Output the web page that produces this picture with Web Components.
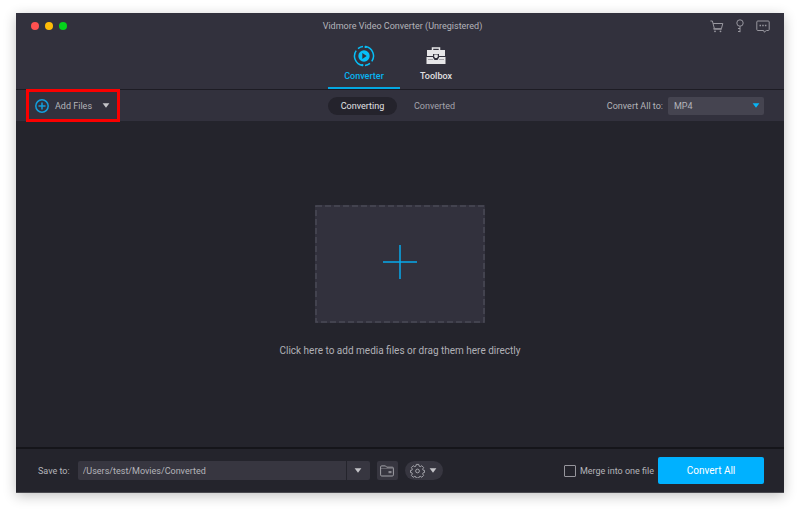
<!DOCTYPE html>
<html lang="en">
<head>
<meta charset="utf-8">
<title>Vidmore Video Converter</title>
<style>
  body {
    margin: 0; min-height: 100vh; box-sizing: border-box; padding: 13px 16px 19px;
    display: flex; background: #fff; color: #b4b4ba;
    font-family: Roboto, "Liberation Sans", sans-serif; font-size: 9px; line-height: 12px;
  }
</style>
</head>
<body>
<converter-app></converter-app>
<script>
const base = `*{box-sizing:border-box}button,input,select{font:inherit;color:inherit;margin:0;padding:0;border:0;background:none}svg{display:block;flex:none}`;
function define(name, css, html) {
  const template = document.createElement('template');
  template.innerHTML = `<style>${base}${css}</style>${html}`;
  customElements.define(name, class extends HTMLElement {
    constructor() {
      super();
      this.attachShadow({ mode: 'open' }).append(template.content.cloneNode(true));
    }
  });
}

define('caret-icon', `:host{display:block;color:#c4c4c8;pointer-events:none}`,
  `<svg width="8" height="5" viewBox="0 0 8 5"><path d="M.6.3h6.8L4 4.8z" fill="currentColor"/></svg>`);

define('title-bar', `
  :host{display:grid;grid-template-columns:1fr auto 1fr;align-items:center;height:26px;padding:0 14px 0 15px}
  .lights{display:flex;gap:6px}
  .lights button{width:8px;height:8px;border-radius:50%}
  .close{background:#ff5150}.min{background:#ffbc07}.max{background:#04d21b}
  h1{margin:0;padding-left:4px;font-size:9px;font-weight:400;color:#b4b4bb}
  .tools{display:flex;justify-content:flex-end;align-items:center;gap:11px;color:#98979f}
`, `
  <div class="lights"><button class="close" aria-label="Close"></button><button class="min" aria-label="Minimize"></button><button class="max" aria-label="Zoom"></button></div>
  <h1><slot></slot></h1>
  <div class="tools">
    <button aria-label="Buy"><svg width="14" height="13" viewBox="0 0 14 13" fill="none" stroke="currentColor"><path d="M.4 1h2l2 7.700h7l1.400-5.200H3.100M4.200 7.900l-.5 1.300h8"/><circle cx="5" cy="11.300" r=".9" fill="currentColor" stroke="none"/><circle cx="10.500" cy="11.300" r=".9" fill="currentColor" stroke="none"/></svg></button>
    <button aria-label="Register"><svg width="10" height="14" viewBox="0 0 10 14" fill="none" stroke="currentColor"><circle cx="5" cy="4" r="3.200"/><path d="M5 7.200v6M3 9.500h2M3 12.500h2"/></svg></button>
    <button aria-label="Feedback"><svg width="14" height="13" viewBox="0 0 14 13" fill="none" stroke="currentColor"><path d="M1.800 1h10.400q1 0 1 1v7.500q0 1-1 1h-1.800l-2.200 1.700-.5-1.700H1.800q-1 0-1-1V2q0-1 1-1z"/><path d="M3.500 5.500h1.500M6.200 5.500h1.500M8.900 5.500h1.500" stroke-width="1.500"/></svg></button>
  </div>`);

define('mode-tab', `
  :host{display:block;width:72px}
  button{width:100%;height:50px;display:flex;flex-direction:column;align-items:center;justify-content:flex-end;gap:3px;padding-bottom:5px;border-bottom:2px solid transparent;color:#e0e0e2;font-weight:500}
  :host([active]) button{color:#07b4f1;border-color:#04a7e2}
`, `<button><slot name="icon"></slot><span><slot></slot></span></button>`);

define('app-header', `
  :host{display:block;background:#32313d;border-bottom:1px solid #1d1c24}
  nav{display:flex;justify-content:center}
`, `
  <title-bar>Vidmore Video Converter (Unregistered)</title-bar>
  <nav>
    <mode-tab active><svg slot="icon" width="22" height="22" viewBox="0 0 22 22" fill="none"><circle cx="11" cy="11" r="5.700" fill="#06bff8"/><path d="M9.300 8v6l4.400-3z" fill="#32313d"/><g stroke="#06bff8" stroke-width="1.500"><path d="M12.500 1.600a9.500 9.500 0 0 1 6.300 14.800"/><path d="M17 18.400a9.500 9.500 0 0 1-5 2"/><path d="M9.500 20.400A9.500 9.500 0 0 1 3.200 5.600"/><path d="M5 3.600a9.500 9.500 0 0 1 5-2"/></g><circle cx="12.700" cy="1.900" r="1.200" fill="#06bff8"/><circle cx="9.300" cy="20.100" r="1.200" fill="#06bff8"/></svg>Converter</mode-tab>
    <mode-tab><svg slot="icon" width="20" height="22" viewBox="0 0 20 22"><path d="M6.500 5.500V3h7v2.500" fill="none" stroke="#e6e6e8" stroke-width="1.500"/><path d="M1 5h18v6H1zM.5 12h19v7H.5z" fill="#e6e6e8"/><path d="M2 14.500h5M13 14.500h5" stroke="#a5a4aa"/><path d="M7 9h6v3.500L11.500 15h-3L7 12.500z" fill="#32313d"/><path d="M8.200 9.500h3.600v2.200L10.800 13H9.200l-1-1.300z" fill="#e6e6e8"/></svg>Toolbox</mode-tab>
  </nav>`);

define('add-files', `
  :host{display:block;position:relative;justify-self:start}
  :host::after{content:"";position:absolute;inset:-1px 0;border:3px solid #fa0000;pointer-events:none}
  button{height:31px;display:flex;align-items:center;padding:0 10px 0 9px;gap:6px}
  caret-icon{margin-left:4px}
`, `<button><svg width="14" height="14" viewBox="0 0 14 14" fill="none" stroke="#139fdc" stroke-width="1.500"><circle cx="7" cy="7" r="6.200"/><path d="M7 3.500v7M3.500 7h7"/></svg><slot></slot><caret-icon></caret-icon></button>`);

define('format-select', `
  :host{display:flex;justify-content:flex-end;align-items:center;gap:5px}
  .box{display:grid;align-items:center;width:96px;background:#454450;border-radius:2px}
  select,caret-icon{grid-area:1/1}
  select{appearance:none;height:18px;width:100%;padding:0 6px}
  caret-icon{justify-self:end;margin-right:4px;color:#07b4f5}
`, `<label for="f"><slot></slot></label><span class="box"><select id="f"><option>MP4</option></select><caret-icon></caret-icon></span>`);

define('tool-strip', `
  :host{display:grid;grid-template-columns:1fr auto 1fr;align-items:center;background:#32313d;padding:0 20px 0 10px}
  .views{display:flex;gap:3px;padding:0 0 0 7px}
  .views button{width:69px;height:18px;border-radius:9px;color:#a4a4ac}
  .views .on{background:#24232c;color:#e2e2e4}
`, `
  <add-files>Add Files</add-files>
  <div class="views"><button class="on">Converting</button><button>Converted</button></div>
  <format-select>Convert All to:</format-select>`);

define('drop-zone', `
  :host{flex:1;display:flex;align-items:center;justify-content:center;padding-bottom:7px;font-size:10px}
  button{display:flex;flex-direction:column;align-items:center;gap:22px;color:#b0b0b6}
  .target{width:170px;height:118px;padding-bottom:4px;display:grid;place-items:center;background:#32313d;position:relative}
  .edge{position:absolute;inset:0;width:100%;height:100%}
`, `<button><span class="target"><svg class="edge"><rect x="1" y="1" width="168" height="116" fill="none" stroke="#4a4956" stroke-width="1.500" stroke-dasharray="6 3"/></svg><svg width="34" height="34" viewBox="0 0 34 34" stroke="#07a9ec" stroke-width="1.500"><path d="M17 0v34M0 17h34"/></svg></span><span><slot></slot></span></button>`);

define('output-bar', `
  :host{display:flex;align-items:center;height:45px;padding:0 20px 0 22px;border-top:2px solid #15151a;background:#24242c}
  .path{display:flex;flex:0 1 292px;margin:0 7px 0 8px;gap:1px}
  .path input{flex:1;min-width:0;height:19px;padding:0 5px;background:#373640;border-radius:2px 0 0 2px}
  .path button{width:23px;background:#373640;display:grid;place-items:center;border-radius:0 2px 2px 0}
  .folder{width:21px;height:19px;background:#373640;border-radius:2px;display:grid;place-items:center;margin-right:7px}
  .gear{width:38px;height:19px;background:#373640;border-radius:10px;display:flex;align-items:center;justify-content:center;gap:4px}
  .merge{margin-left:auto;display:flex;align-items:center;gap:4px;margin-right:4px}
  .merge input{appearance:none;width:12px;height:12px;border:1px solid #96959c;border-radius:1px}
  .go{width:106px;height:27px;border-radius:2px;background:#00b1ff;color:#fff;font-size:10px}
`, `
  <label for="p">Save to:</label>
  <span class="path"><input id="p" value="/Users/test/Movies/Converted"><button aria-label="Recent folders"><caret-icon></caret-icon></button></span>
  <button class="folder" aria-label="Open folder"><svg width="14" height="12" viewBox="0 0 14 12" fill="none" stroke="#a0a0a6"><path d="M1.700 11Q.6 11 .6 9.900V1.900Q.6.900 1.700.900H5.500L6.700 2.200h5.600q1.100 0 1.100 1v6.700q0 1.100-1.100 1.100z"/><path d="M.6 3.500h12.500" opacity=".4"/><path d="M11.500 6h-3v2.200h3z" stroke="none" fill="#8a8991"/></svg></button>
  <button class="gear" aria-label="Settings"><svg width="15" height="15" viewBox="0 0 16 16" fill="none" stroke="#a9a9af"><circle cx="8" cy="8.500" r="2"/><path d="M6.700 1.500h2.600l.5 1.900 1.100.5 1.700-1 1.900 1.900-1 1.700.4 1.100 1.600.3v2.200l-1.600.4-.4 1.100 1 1.700-1.900 1.900-1.700-1-1.100.5-.5 1.300H6.700l-.5-1.300-1.100-.5-1.700 1-1.900-1.900 1-1.700-.4-1.100L.5 10.100V7.900l1.600-.3.4-1.100-1-1.700 1.900-1.900 1.700 1 1.100-.5z"/></svg><caret-icon></caret-icon></button>
  <label class="merge"><input type="checkbox">Merge into one file</label>
  <button class="go">Convert All</button>`);

define('converter-app', `
  :host{flex:1;display:flex;flex-direction:column;background:#24242c;border-bottom:1px solid #4a4a50;box-shadow:0 3px 12px rgba(0,0,0,.24)}
`, `
  <app-header></app-header>
  <tool-strip></tool-strip>
  <drop-zone>Click here to add media files or drag them here directly</drop-zone>
  <output-bar></output-bar>`);
</script>
</body>
</html>
